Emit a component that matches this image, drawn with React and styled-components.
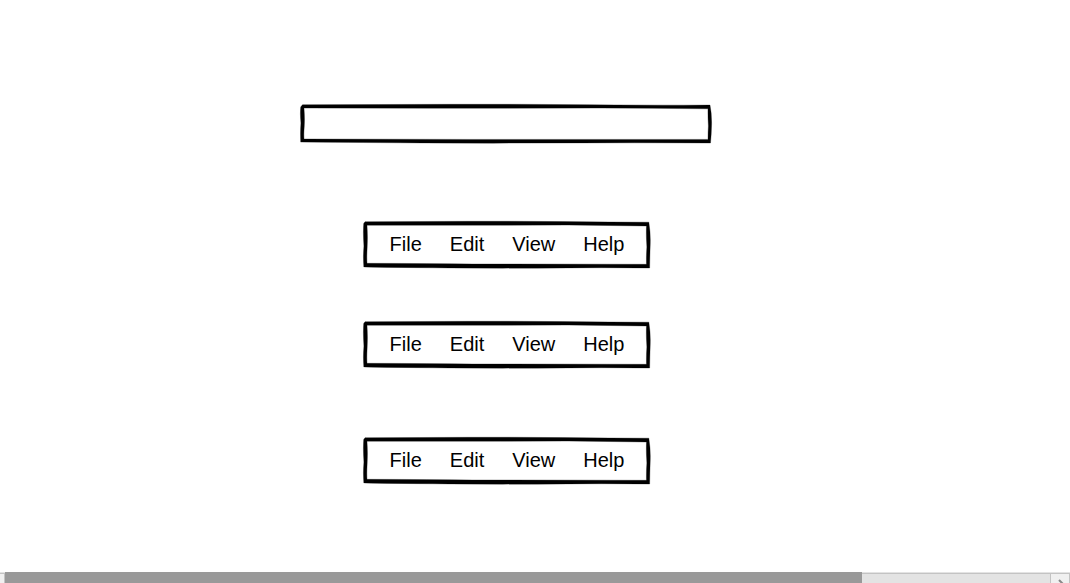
import React from "react";
import styled, { createGlobalStyle } from "styled-components";

const GlobalStyle = createGlobalStyle`
  * { box-sizing: border-box; }
  body {
    margin: 0;
    background: #fff;
    color: #000;
    font-family: "Liberation Sans", Arial, sans-serif;
  }
`;

const Page = styled.div`
  display: flex;
  flex-direction: column;
  min-height: 100vh;
`;

const Canvas = styled.main`
  flex: 1;
  display: flex;
  flex-direction: column;
  align-items: center;
  padding: 104px 57px 0 0;
`;

const Framed = styled.div`
  position: relative;
  margin-bottom: ${(p) => p.$after}px;
`;

const Outline = styled.svg`
  position: absolute;
  inset: 0;
  width: 100%;
  height: 100%;
  overflow: visible;
  pointer-events: none;
`;

const TextField = styled.input`
  display: block;
  width: 413px;
  max-width: 90vw;
  height: 40px;
  padding: 0 12px;
  border: 0;
  outline: 0;
  background: transparent;
  font: inherit;
  font-size: 20px;
`;

const MenuBar = styled.nav`
  display: flex;
  align-items: center;
  gap: 28px;
  height: 48px;
  padding: 0 26px 3px 27px;
`;

const MenuItem = styled.button`
  padding: 0;
  border: 0;
  background: transparent;
  color: inherit;
  font-family: inherit;
  font-size: 20px;
  line-height: 24px;
`;

const ScrollBar = styled.footer`
  display: flex;
  height: 11px;
  overflow: hidden;
  background: #e3e3e3;
`;

const ScrollButton = styled.button`
  flex: none;
  width: ${(p) => (p.$clipped ? 5 : 20)}px;
  height: 20px;
  margin-top: 1px;
  padding: ${(p) => (p.$clipped ? "0" : "0 0 0 7px")};
  border: 1px solid #c3c3c3;
  border-left-width: ${(p) => (p.$clipped ? 0 : 1)}px;
  background: #f0f0f0;
  line-height: 0;
  text-align: left;
`;

const Track = styled.div`
  flex: 1;
  background: linear-gradient(#e3e3e3 1px, #c3c3c3 1px, #c3c3c3 2px, #e3e3e3 2px);
`;

const Thumb = styled.div`
  width: 82%;
  height: 11px;
  background: #999;
`;

const wideOutline =
  "M2.5 .7 Q80 .5 150 .3 T290 .7 T410 1.1 Q411.8 10 411.6 20 T410.5 39 Q350 38.7 280 38.9 Q180 39.4 100 38.8 T.7 38.1 Q.2 28 .9 19 Q0 9 .7 3 Z M4 4.1 Q4.8 14 4.3 22 Q3.6 30 4 35 Q90 35.2 170 35.4 H408 Q408 28 408.4 22 Q407.8 13 408 4.8 Q350 4.3 300 4.1 Q200 4.2 130 4.2 Z";
const menuOutline =
  "M2 .7 Q60 .5 105 .3 T200 .6 T286 1.2 Q287.8 12 287.4 23 T286.8 47 Q240 46.5 205 46.9 Q130 47.4 70 46.8 T.8 45.9 Q0 36 .9 25 Q0 11 .7 2.5 Z M4 4.2 Q4.8 15 4.2 26 Q3.6 36 4 42.3 Q70 42.5 110 43 Q190 43 283.6 43.3 Q283.4 34 284 26 Q283.2 14 283.6 5 Q240 4.4 205 4.1 Q130 4.2 85 4.2 Z";

function SketchOutline({ wide }) {
  return (
    <Outline
      viewBox={wide ? "0 0 413 40" : "0 0 288 48"}
      preserveAspectRatio="none"
      aria-hidden="true"
    >
      <path
        fillRule="evenodd"
        stroke="#000"
        strokeWidth="0.3"
        d={wide ? wideOutline : menuOutline}
      />
    </Outline>
  );
}

const menus = [
  { id: "first", after: 52 },
  { id: "second", after: 68 },
  { id: "third", after: 0 },
];

export default function App() {
  return (
    <Page>
      <GlobalStyle />
      <Canvas>
        <Framed $after={77}>
          <TextField type="text" aria-label="Text" />
          <SketchOutline wide />
        </Framed>
        {menus.map((menu) => (
          <Framed key={menu.id} $after={menu.after}>
            <MenuBar aria-label={`Menu, ${menu.id}`}>
              {["File", "Edit", "View", "Help"].map((label) => (
                <MenuItem key={label} type="button">{label}</MenuItem>
              ))}
            </MenuBar>
            <SketchOutline />
          </Framed>
        ))}
      </Canvas>
      <ScrollBar>
        <ScrollButton type="button" $clipped aria-label="Scroll left" />
        <Track><Thumb /></Track>
        <ScrollButton type="button" aria-label="Scroll right">
          <svg width="8" height="8" viewBox="0 0 8 8" aria-hidden="true">
            <path d="M1 1 L5 5 L1 8" fill="none" stroke="#888" strokeWidth="2" />
          </svg>
        </ScrollButton>
      </ScrollBar>
    </Page>
  );
}
